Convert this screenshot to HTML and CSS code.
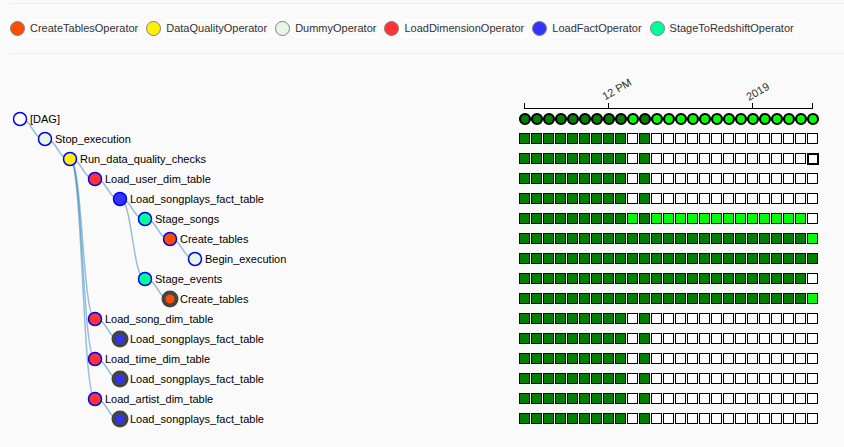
FILE: index.html
```
<!DOCTYPE html>
<html lang="en">
<head>
<meta charset="utf-8">
<title>DAG tree view</title>
<link rel="stylesheet" href="styles.css">
</head>
<body>
<div class="legend">
  <div class="item"><span class="dot create"></span><span class="label">CreateTablesOperator</span></div>
  <div class="item"><span class="dot quality"></span><span class="label">DataQualityOperator</span></div>
  <div class="item"><span class="dot dummy"></span><span class="label">DummyOperator</span></div>
  <div class="item"><span class="dot dimension"></span><span class="label">LoadDimensionOperator</span></div>
  <div class="item"><span class="dot fact"></span><span class="label">LoadFactOperator</span></div>
  <div class="item"><span class="dot stage"></span><span class="label">StageToRedshiftOperator</span></div>
</div>
<svg class="tree" id="tree" width="844" height="393" viewBox="0 54 844 393">
  <g class="axis">
    <path d="M524.5 103V108.5H812.5V103M608.5 103V108.5M752.5 103V108.5"/>
    <text transform="translate(605 100.5) rotate(-30)">12 PM</text>
    <text transform="translate(749 101) rotate(-30)">2019</text>
  </g>
</svg>
<script src="tree.js"></script>
</body>
</html>
```
FILE: styles.css
```
body {
  margin: 0;
  width: 844px;
  height: 447px;
  overflow: hidden;
  background: #fafafa;
  font-family: "Liberation Sans", Arial, sans-serif;
  font-size: 11px;
  color: #333;
}
.legend {
  display: flex;
  align-items: center;
  gap: 4px;
  box-sizing: border-box;
  height: 51px;
  margin: 3px 0 0 10px;
  border-top: 1px solid #eee;
  border-bottom: 1px solid #eee;
}
.item {
  display: flex;
  align-items: center;
  gap: 1px;
}
.dot {
  box-sizing: border-box;
  width: 15px;
  height: 15px;
  border: 1px solid #808080;
  border-radius: 50%;
}
.label {
  box-sizing: border-box;
  height: 19px;
  padding: 0 2px;
  border: 2px solid #fff;
  border-radius: 5px;
  line-height: 15px;
  white-space: nowrap;
}
.create { background: #ff4d00; fill: #ff4d00; }
.quality { background: #fff000; fill: #fff000; }
.dummy { background: #e8f7e4; fill: #e8f7e4; }
.dimension { background: #ff3333; fill: #ff3333; }
.fact { background: #3333ff; fill: #3333ff; }
.stage { background: #00ff99; fill: #00ff99; }
.root { fill: #fff; }
.tree { display: block; }
.tree text { font-size: 11px; fill: #000; }
.axis path { fill: none; stroke: #000; shape-rendering: crispEdges; }
.tree .axis text { fill: #333; }
.link { fill: none; stroke: #1f77b4; stroke-opacity: .45; stroke-width: 1.5; }
.node { stroke: #0000ff; stroke-width: 1.5; }
.collapsed { stroke: #444; stroke-width: 4; }
.run { stroke: #000; stroke-width: 2.2; }
.rail { stroke: #000; stroke-opacity: .65; stroke-width: 2; }
.task { stroke: #000; stroke-width: 1; shape-rendering: crispEdges; }
.selected { stroke-width: 2; }
.s { fill: #008000; }
.r { fill: #00ff00; }
.n { fill: #fff; }
```
FILE: tree.js
```
const svg = document.getElementById('tree');
const waiting = 's'.repeat(9) + 'ns' + 'n'.repeat(14);
const songs = 's'.repeat(9) + 'rs' + 'r'.repeat(13) + 'n';
const running = 's'.repeat(24) + 'r';
const events = 's'.repeat(24) + 'n';
const done = 's'.repeat(25);
const runs = 's'.repeat(9) + 'rs' + 'r'.repeat(14);
// name, depth, parent row, operator, states, collapsed
const rows = [
  ['[DAG]', 0, -1, 'root', runs],
  ['Stop_execution', 1, 0, 'dummy', waiting],
  ['Run_data_quality_checks', 2, 1, 'quality', waiting],
  ['Load_user_dim_table', 3, 2, 'dimension', waiting],
  ['Load_songplays_fact_table', 4, 3, 'fact', waiting],
  ['Stage_songs', 5, 4, 'stage', songs],
  ['Create_tables', 6, 5, 'create', running],
  ['Begin_execution', 7, 6, 'dummy', done],
  ['Stage_events', 5, 4, 'stage', events],
  ['Create_tables', 6, 8, 'create', running, true],
  ['Load_song_dim_table', 3, 2, 'dimension', waiting],
  ['Load_songplays_fact_table', 4, 10, 'fact', waiting, true],
  ['Load_time_dim_table', 3, 2, 'dimension', waiting],
  ['Load_songplays_fact_table', 4, 12, 'fact', waiting, true],
  ['Load_artist_dim_table', 3, 2, 'dimension', waiting],
  ['Load_songplays_fact_table', 4, 14, 'fact', waiting, true]
];

function add(tag, attrs, text) {
  const el = document.createElementNS('http://www.w3.org/2000/svg', tag);
  for (const key in attrs) el.setAttribute(key, attrs[key]);
  if (text) el.textContent = text;
  svg.appendChild(el);
}
const px = depth => 20 + depth * 25;
const py = row => 119 + row * 20;

rows.forEach(([, depth, parent], i) => {
  if (parent < 0) return;
  const x0 = px(rows[parent][1]), y0 = py(parent), x1 = px(depth), y1 = py(i), m = (x0 + x1) / 2;
  add('path', { class: 'link', d: `M${x0} ${y0}C${m} ${y0} ${m} ${y1} ${x1} ${y1}` });
});
add('line', { class: 'rail', x1: 525, y1: 119, x2: 813, y2: 119 });
rows.forEach(([name, depth, , kind, states, collapsed], i) => {
  add('circle', { class: `node ${kind}${collapsed ? ' collapsed' : ''}`, cx: px(depth), cy: py(i), r: 6.5 });
  add('text', { x: px(depth) + 10, y: py(i) + 4 }, name);
  [...states].forEach((state, c) => {
    if (i === 0) {
      add('circle', { class: `run ${state}`, cx: 525 + c * 12, cy: 119, r: 5 });
    } else {
      const chosen = i === 2 && c === 24;
      const off = chosen ? 20 : 19.5;
      add('rect', { class: `task ${state}${chosen ? ' selected' : ''}`, x: 500 + off + c * 12, y: py(i) - 25 + off, width: 10, height: 10 });
    }
  });
});
```
